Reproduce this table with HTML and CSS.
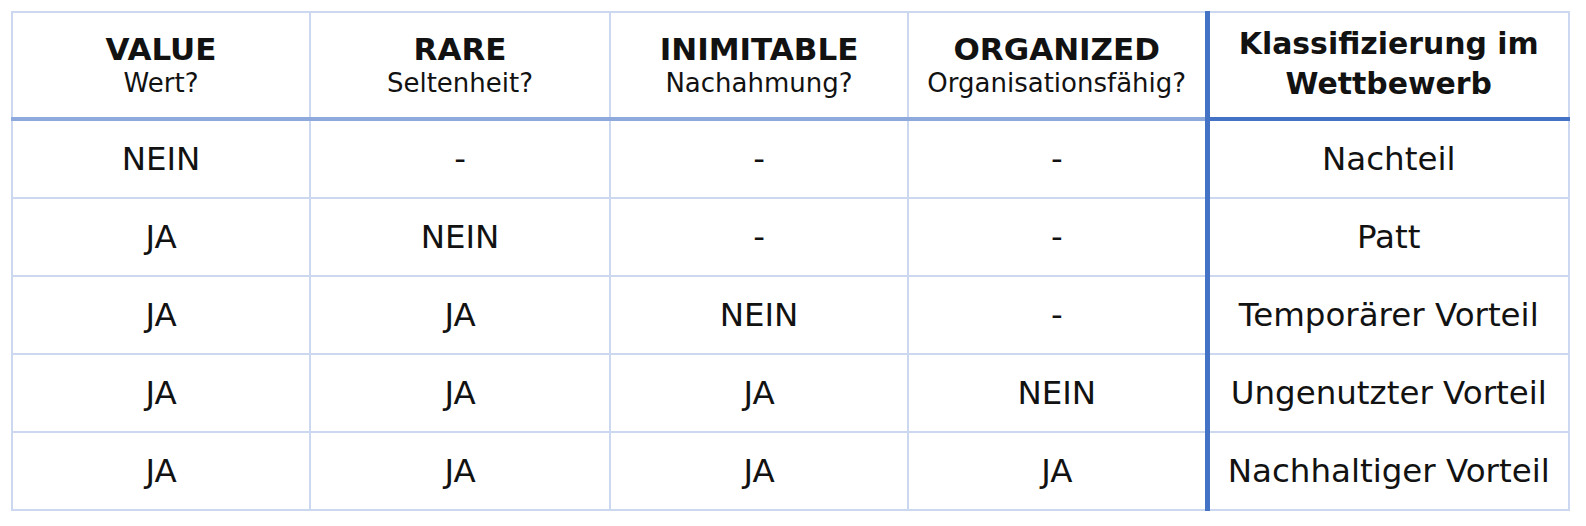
FILE: index.html
```html
<!DOCTYPE html>
<html lang="de">
<head>
<meta charset="utf-8">
<title>VRIO</title>
<link rel="stylesheet" href="styles.css">
</head>
<body>
<table class="vrio">
  <colgroup>
    <col class="c1"><col class="c2"><col class="c3"><col class="c4"><col class="c5">
  </colgroup>
  <thead>
    <tr>
      <th><span class="h-main">VALUE</span><span class="h-sub">Wert?</span></th>
      <th><span class="h-main">RARE</span><span class="h-sub">Seltenheit?</span></th>
      <th><span class="h-main">INIMITABLE</span><span class="h-sub">Nachahmung?</span></th>
      <th><span class="h-main">ORGANIZED</span><span class="h-sub">Organisationsfähig?</span></th>
      <th class="result-head">Klassifizierung im Wettbewerb</th>
    </tr>
  </thead>
  <tbody>
    <tr><td>NEIN</td><td>-</td><td>-</td><td>-</td><td class="result">Nachteil</td></tr>
    <tr><td>JA</td><td>NEIN</td><td>-</td><td>-</td><td class="result">Patt</td></tr>
    <tr><td>JA</td><td>JA</td><td>NEIN</td><td>-</td><td class="result">Temporärer Vorteil</td></tr>
    <tr><td>JA</td><td>JA</td><td>JA</td><td>NEIN</td><td class="result">Ungenutzter Vorteil</td></tr>
    <tr><td>JA</td><td>JA</td><td>JA</td><td>JA</td><td class="result">Nachhaltiger Vorteil</td></tr>
  </tbody>
</table>
</body>
</html>
```

FILE: styles.css
```css
html, body {
  margin: 0;
  padding: 0;
  background: #ffffff;
}

body {
  padding: 11px 0 0 11px;
  font-family: "DejaVu Sans", "Liberation Sans", sans-serif;
  color: #121212;
}

.vrio {
  border-collapse: collapse;
  table-layout: fixed;
  width: 1557px;
}

.c1 { width: 298px; }
.c2 { width: 300px; }
.c3 { width: 298px; }
.c4 { width: 299px; }
.c5 { width: 362px; }

.vrio th,
.vrio td {
  border: 2px solid #cbd8f0;
  text-align: center;
  vertical-align: middle;
  padding: 0 4px;
}

.vrio th {
  height: 102px;
  padding-top: 2px;
  border-bottom: 4px solid #8eaadc;
  font-weight: normal;
}

.h-main {
  display: block;
  font-weight: bold;
  font-size: 31px;
  line-height: 34px;
}

.h-sub {
  display: block;
  font-size: 26px;
  line-height: 34px;
}

.vrio th.result-head {
  font-weight: bold;
  font-size: 29.9px;
  line-height: 40px;
  border-left: 5px solid #4472c4;
  border-bottom: 4px solid #4472c4;
  padding: 0 2px 2px;
}

.vrio td {
  height: 76px;
  font-size: 32.5px;
}

.vrio td.result {
  border-left: 5px solid #4472c4;
}
```
